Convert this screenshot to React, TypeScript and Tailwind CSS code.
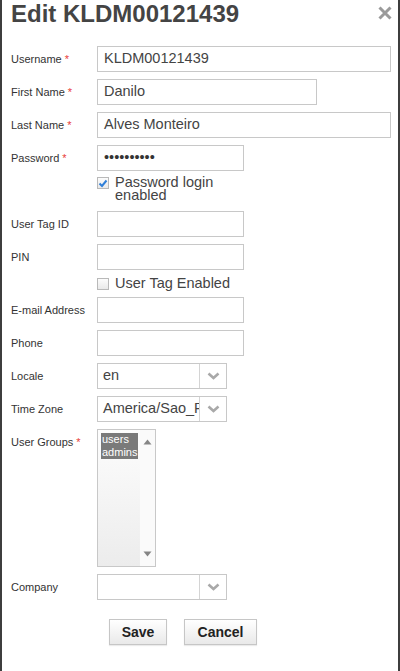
import React from "react";

interface RowProps {
  label: string;
  required?: boolean;
  children: React.ReactNode;
  top?: boolean;
}

// one label + control line of the form
const Row: React.FC<RowProps> = ({ label, required, children, top }) => {
  return (
    <div className={top ? "flex items-start mb-[7px]" : "flex items-center h-[26px] mb-[7px]"}>
      <div className="w-[86px] h-[26px] flex items-center text-[11px] text-[#333] leading-none">
        {label}
        {required && <span className="text-[#e8403a] ml-[3px] text-[11px]">*</span>}
      </div>
      {children}
    </div>
  );
};

const TextBox = ({ value, width }: { value?: string; width: string }) => (
  <div
    className={
      "h-[26px] border border-[#c8c8c8] bg-white flex items-center pl-[6px] text-[14.5px] text-[#444] whitespace-nowrap overflow-hidden " +
      width
    }
  >
    {value}
  </div>
);

const Chevron = () => (
  <svg width="13" height="8" viewBox="0 0 13 8">
    <path d="M1.5 1.5 L6.5 6 L11.5 1.5" fill="none" stroke="#a9a9a9" strokeWidth="2.6" />
  </svg>
);

const SelectBox = ({ value }: { value?: string }) => (
  <div className="h-[26px] w-[130px] border border-[#c8c8c8] bg-white flex">
    <div className="w-[101px] pl-[5px] flex items-center text-[14.5px] text-[#444] whitespace-nowrap overflow-hidden">
      {value}
    </div>
    <div className="flex-1 border-l border-[#d4d4d4] flex items-center justify-center pl-[1px]">
      <Chevron />
    </div>
  </div>
);

const CheckBox = ({ checked }: { checked?: boolean }) => (
  <span className="w-[12px] h-[12px] shrink-0 border border-[#b9b9b9] bg-linear-to-b from-[#fcfcfc] to-[#e9e9e9] flex items-center justify-center">
    {checked && (
      <svg width="10" height="9" viewBox="0 0 10 9">
        <path d="M1.5 4.5 L4 7 L8.5 1.5" fill="none" stroke="#2f7fd8" strokeWidth="2" />
      </svg>
    )}
  </span>
);

export default function App() {
  return (
    <div className="w-[400px] h-[671px] bg-white border-x-2 border-[#3d3d3d] font-['Liberation_Sans',Arial,sans-serif] overflow-hidden">
      <div className="pl-[9px]">
        <div className="h-[46px] flex justify-between items-start pr-[6px]">
          <h1 className="text-[24px] font-bold text-[#444] leading-[28px]">Edit KLDM00121439</h1>
          <svg width="14" height="14" viewBox="0 0 14 14" className="mt-[6px]">
            <path d="M1.5 1.5 L12.5 12.5 M12.5 1.5 L1.5 12.5" stroke="#9a9a9a" strokeWidth="3" />
          </svg>
        </div>

        <Row label="Username" required>
          <TextBox value="KLDM00121439" width="w-[294px]" />
        </Row>
        <Row label="First Name" required>
          <TextBox value="Danilo" width="w-[220px]" />
        </Row>
        <Row label="Last Name" required>
          <TextBox value="Alves Monteiro" width="w-[294px]" />
        </Row>
        <div className="flex items-center h-[26px]">
          <div className="w-[86px] text-[11px] text-[#333] leading-none">
            Password<span className="text-[#e8403a] ml-[3px]">*</span>
          </div>
          <div className="h-[26px] w-[147px] border border-[#c8c8c8] flex items-center pl-[6px] text-[14.5px] text-[#333]">
            ••••••••••
          </div>
        </div>
        <div className="h-[40px] pt-[5px] pl-[86px]">
          <div className="w-[147px] flex items-start gap-[6px]">
            <span className="mt-[1px]">
              <CheckBox checked />
            </span>
            <span className="text-[14.5px] leading-[13.4px] text-[#444]">Password login enabled</span>
          </div>
        </div>

        <Row label="User Tag ID">
          <TextBox width="w-[147px]" />
        </Row>
        <div className="flex items-center h-[26px]">
          <div className="w-[86px] text-[11px] text-[#333] leading-none">PIN</div>
          <TextBox width="w-[147px]" />
        </div>
        <div className="h-[27px] pl-[86px] flex items-center gap-[6px]">
          <CheckBox />
          <span className="text-[14.5px] text-[#444] leading-none">User Tag Enabled</span>
        </div>

        <Row label="E-mail Address">
          <TextBox width="w-[147px]" />
        </Row>
        <Row label="Phone">
          <TextBox width="w-[147px]" />
        </Row>
        <Row label="Locale">
          <SelectBox value="en" />
        </Row>
        <Row label="Time Zone">
          <SelectBox value="America/Sao_Paulo" />
        </Row>
        <Row label="User Groups" required top>
          <div className="w-[59px] h-[138px] border border-[#c8c8c8] flex">
            <div className="flex-1 bg-linear-to-b from-[#fdfdfd] to-[#ececec] pt-[3px] pl-[3px]">
              <div className="bg-[#7a7a7a] text-white text-[11px] leading-[13px] pl-[1px] pr-[1px] w-fit">
                <div>users</div>
                <div>admins</div>
              </div>
            </div>
            <div className="w-[15px] bg-[#fafafa] flex flex-col items-center justify-between py-[9px]">
              <svg width="9" height="6" viewBox="0 0 9 6">
                <path d="M0.5 5.5 L4.5 0.5 L8.5 5.5 Z" fill="#858585" />
              </svg>
              <svg width="9" height="6" viewBox="0 0 9 6">
                <path d="M0.5 0.5 L4.5 5.5 L8.5 0.5 Z" fill="#858585" />
              </svg>
            </div>
          </div>
        </Row>
        <div className="flex items-center h-[26px]">
          <div className="w-[86px] text-[11px] text-[#333] leading-none">Company</div>
          <SelectBox />
        </div>

        <div className="flex gap-[17px] pl-[98px] mt-[19px]">
          <button className="w-[58px] h-[26px] border border-[#c6c6c6] bg-linear-to-b from-white to-[#e9e9e9] shadow-[0_1px_1px_rgba(0,0,0,0.08)] text-[14px] font-bold text-[#222]">
            Save
          </button>
          <button className="w-[73px] h-[26px] border border-[#c6c6c6] bg-linear-to-b from-white to-[#e9e9e9] shadow-[0_1px_1px_rgba(0,0,0,0.08)] text-[14px] font-bold text-[#222]">
            Cancel
          </button>
        </div>
      </div>
    </div>
  );
}
